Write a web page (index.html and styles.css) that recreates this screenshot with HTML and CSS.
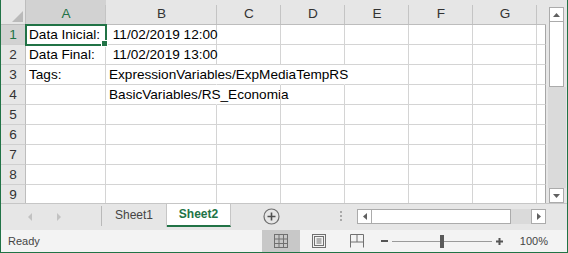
FILE: index.html
```html
<!DOCTYPE html>
<html lang="pt">
<head>
    <meta charset="UTF-8">
    <meta name="viewport" content="width=device-width, initial-scale=1.0">
    <title>Sheet2</title>
    <link rel="stylesheet" href="styles.css">
</head>
<body>
    <div class="window">
        <div class="workspace">
            <div class="sheet">
                <!-- header -->
                <div class="corner">
                    <svg width="11" height="11" viewBox="0 0 11 11"><polygon points="11,0 11,11 0,11" fill="#bababa"/></svg>
                </div>
                <div class="col-head active">A</div>
                <div class="col-head">B</div>
                <div class="col-head">C</div>
                <div class="col-head">D</div>
                <div class="col-head">E</div>
                <div class="col-head">F</div>
                <div class="col-head">G</div>
                <div class="col-head last"></div>

                <!-- row 1 -->
                <div class="row-head active">1</div>
                <div class="cell selected">Data Inicial:</div>
                <div class="cell"> 11/02/2019 12:00</div>
                <div class="cell"></div>
                <div class="cell"></div>
                <div class="cell"></div>
                <div class="cell"></div>
                <div class="cell"></div>
                <div class="cell edge"></div>

                <!-- row 2 -->
                <div class="row-head">2</div>
                <div class="cell">Data Final:</div>
                <div class="cell"> 11/02/2019 13:00</div>
                <div class="cell"></div>
                <div class="cell"></div>
                <div class="cell"></div>
                <div class="cell"></div>
                <div class="cell"></div>
                <div class="cell edge"></div>

                <!-- row 3 -->
                <div class="row-head">3</div>
                <div class="cell">Tags:</div>
                <div class="cell spill">ExpressionVariables/ExpMediaTempRS</div>
                <div class="cell spill"></div>
                <div class="cell spill"></div>
                <div class="cell"></div>
                <div class="cell"></div>
                <div class="cell"></div>
                <div class="cell edge"></div>

                <!-- row 4 -->
                <div class="row-head">4</div>
                <div class="cell"></div>
                <div class="cell spill">BasicVariables/RS_Economia</div>
                <div class="cell"></div>
                <div class="cell"></div>
                <div class="cell"></div>
                <div class="cell"></div>
                <div class="cell"></div>
                <div class="cell edge"></div>

                <!-- rows 5-9 -->
                <div class="row-head">5</div>
                <div class="cell"></div><div class="cell"></div><div class="cell"></div><div class="cell"></div>
                <div class="cell"></div><div class="cell"></div><div class="cell"></div><div class="cell edge"></div>

                <div class="row-head">6</div>
                <div class="cell"></div><div class="cell"></div><div class="cell"></div><div class="cell"></div>
                <div class="cell"></div><div class="cell"></div><div class="cell"></div><div class="cell edge"></div>

                <div class="row-head">7</div>
                <div class="cell"></div><div class="cell"></div><div class="cell"></div><div class="cell"></div>
                <div class="cell"></div><div class="cell"></div><div class="cell"></div><div class="cell edge"></div>

                <div class="row-head">8</div>
                <div class="cell"></div><div class="cell"></div><div class="cell"></div><div class="cell"></div>
                <div class="cell"></div><div class="cell"></div><div class="cell"></div><div class="cell edge"></div>

                <div class="row-head">9</div>
                <div class="cell"></div><div class="cell"></div><div class="cell"></div><div class="cell"></div>
                <div class="cell"></div><div class="cell"></div><div class="cell"></div><div class="cell edge"></div>
            </div>

            <div class="vscroll">
                <div class="sb-btn">
                    <svg width="7" height="4" viewBox="0 0 7 4"><polygon points="0,4 3.5,0 7,4" fill="#606060"/></svg>
                </div>
                <div class="sb-thumb-v"></div>
                <div class="sb-track-v"></div>
                <div class="sb-btn">
                    <svg width="7" height="4" viewBox="0 0 7 4"><polygon points="0,0 7,0 3.5,4" fill="#606060"/></svg>
                </div>
            </div>
        </div>

        <div class="tabbar">
            <div class="tab-nav">
                <svg width="4" height="8" viewBox="0 0 4 8"><polygon points="4,0 4,8 0,4" fill="#c2c2c2"/></svg>
                <svg width="4" height="8" viewBox="0 0 4 8"><polygon points="0,0 4,4 0,8" fill="#c2c2c2"/></svg>
            </div>
            <div class="tab-sep"></div>
            <div class="tab">Sheet1</div>
            <div class="tab active">Sheet2</div>
            <div class="add-sheet">
                <svg width="17" height="17" viewBox="0 0 17 17">
                    <circle cx="8.5" cy="8.5" r="7.5" fill="none" stroke="#6f6f6f" stroke-width="1.2"/>
                    <path d="M8.5 4.5v8M4.5 8.5h8" stroke="#505050" stroke-width="1.6"/>
                </svg>
            </div>
            <div class="split-dots"><span></span><span></span><span></span></div>
            <div class="hscroll">
                <div class="sb-btn">
                    <svg width="4" height="7" viewBox="0 0 4 7"><polygon points="4,0 4,7 0,3.5" fill="#606060"/></svg>
                </div>
                <div class="sb-thumb-h"></div>
                <div class="sb-track-h"></div>
                <div class="sb-btn">
                    <svg width="4" height="7" viewBox="0 0 4 7"><polygon points="0,0 4,3.5 0,7" fill="#606060"/></svg>
                </div>
            </div>
        </div>

        <div class="statusbar">
            <div class="status-text">Ready</div>
            <div class="view-btn active">
                <svg width="14" height="14" viewBox="0 0 14 14" fill="none" stroke="#707070">
                    <rect x="0.5" y="0.5" width="13" height="13"/>
                    <path d="M5 0.5v13M9.5 0.5v13M0.5 5h13M0.5 9.5h13"/>
                </svg>
            </div>
            <div class="view-btn">
                <svg width="14" height="14" viewBox="0 0 14 14" fill="none" stroke="#707070">
                    <rect x="0.5" y="0.5" width="13" height="13"/>
                    <rect x="2.5" y="2.5" width="9" height="9"/>
                    <path d="M4.5 5h5M4.5 7h5M4.5 9h5"/>
                </svg>
            </div>
            <div class="view-btn">
                <svg width="14" height="14" viewBox="0 0 14 14" fill="none" stroke="#707070">
                    <path d="M0.5 13.5V0.5h13v13M7 0.5v7.5M0.5 8h13"/>
                </svg>
            </div>
            <div class="zoom">
                <svg width="7" height="2" viewBox="0 0 7 2"><rect width="7" height="2" fill="#555"/></svg>
                <div class="zoom-track"><div class="zoom-thumb"></div></div>
                <svg width="7" height="7" viewBox="0 0 7 7"><path d="M0 3.5h7M3.5 0v7" stroke="#555" stroke-width="2"/></svg>
                <span class="zoom-level">100%</span>
            </div>
        </div>
    </div>
</body>
</html>
```

FILE: styles.css
```css
* {
    margin: 0;
    padding: 0;
    box-sizing: border-box;
}

body {
    font-family: 'Liberation Sans', Arial, sans-serif;
    background: #fff;
}

.window {
    width: 568px;
    height: 253px;
    display: flex;
    flex-direction: column;
    border: 1px solid #217346;
    border-top: none;
    overflow: hidden;
}

/* grid + vertical scrollbar */
.workspace {
    display: flex;
    height: 203px;
}

.sheet {
    display: grid;
    grid-template-columns: 25px 80px 111px 64px 64px 64px 64px 64px 9px;
    grid-template-rows: 25px repeat(9, 20px);
    width: 545px;
    height: 203px;
    overflow: hidden;
    background: #fff;
    font-size: 13.6px;
}

.corner {
    background: #e6e6e6;
    border-right: 1px solid #bdbdbd;
    border-bottom: 1px solid #bdbdbd;
    display: flex;
    align-items: flex-end;
    justify-content: flex-end;
    padding: 0 2px 2px 0;
}

.col-head {
    background: linear-gradient(to left, #c4c4c4 1px, transparent 1px) 0 5px / 100% 100% no-repeat, #e6e6e6;
    border-bottom: 1px solid #bdbdbd;
    color: #333;
    display: flex;
    align-items: center;
    justify-content: center;
    padding-top: 2px;
}

.col-head.last {
    background: #e6e6e6;
}

.row-head {
    background: #e6e6e6;
    border-right: 1px solid #bdbdbd;
    border-bottom: 1px solid #cfcfcf;
    color: #333;
    text-align: center;
    line-height: 19px;
}

.col-head.active,
.row-head.active {
    background-color: #d2d2d2;
    color: #217346;
}

.cell {
    border-right: 1px solid #d4d4d4;
    border-bottom: 1px solid #d4d4d4;
    padding: 0 3px;
    line-height: 19px;
    white-space: pre;
    color: #000;
}

.cell.spill {
    border-right-color: transparent;
}

.cell.edge {
    border-right-color: #a6a6a6;
}

.cell.selected {
    position: relative;
    z-index: 1;
    outline: 2px solid #217346;
    outline-offset: -1px;
}

.cell.selected::after {
    content: '';
    position: absolute;
    right: -2px;
    bottom: -2px;
    width: 5px;
    height: 5px;
    background: #217346;
    box-shadow: 0 0 0 1px #fff;
}

.vscroll {
    width: 21px;
    background: #e6e6e6;
    display: flex;
    flex-direction: column;
    padding: 7px 3px 0 3px;
}

.sb-btn {
    width: 15px;
    height: 15px;
    flex-shrink: 0;
    border: 1px solid #ababab;
    background: #fff;
    display: flex;
    align-items: center;
    justify-content: center;
}

.sb-thumb-v {
    height: 65px;
    border: 1px solid #ababab;
    border-top: none;
    background: #fff;
}

.sb-track-v {
    flex: 1;
    background: #dadada;
    margin: 0 -2px 0 -1px;
}

/* sheet tabs */
.tabbar {
    height: 27px;
    border-top: 1px solid #c6c6c6;
    background: #e6e6e6;
    display: flex;
    align-items: flex-start;
    padding-right: 21px;
    font-size: 12px;
}

.tab-nav {
    width: 100px;
    height: 100%;
    display: flex;
    align-items: center;
    gap: 25px;
    padding-left: 27px;
    padding-bottom: 1px;
}

.tab-sep {
    width: 1px;
    height: 20px;
    margin-top: 2px;
    background: #b9b9b9;
}

.tab {
    width: 65px;
    height: 23px;
    line-height: 22px;
    text-align: center;
    color: #444;
    border-right: 1px solid #c6c6c6;
}

.tab.active {
    width: 64px;
    background: #fff;
    color: #217346;
    font-weight: bold;
    border-bottom: 2px solid #217346;
    line-height: 21px;
}

.add-sheet {
    margin-left: 32px;
    margin-top: 4px;
    display: flex;
}

.split-dots {
    margin-left: auto;
    margin-right: 15px;
    margin-top: 7px;
    display: flex;
    flex-direction: column;
    gap: 2px;
}

.split-dots span {
    width: 2px;
    height: 2px;
    background: #a9a9a9;
}

.hscroll {
    width: 189px;
    height: 15px;
    margin-top: 5px;
    display: flex;
}

.sb-thumb-h {
    width: 139px;
    border: 1px solid #ababab;
    border-left: none;
    background: #fff;
}

.sb-track-h {
    flex: 1;
    background: #dadada;
}

/* status bar */
.statusbar {
    flex: 1;
    background: #f3f3f3;
    display: flex;
    align-items: stretch;
    font-size: 11px;
    color: #444;
}

.status-text {
    flex: 1;
    padding-left: 7px;
    display: flex;
    align-items: center;
}

.view-btn {
    width: 38px;
    display: flex;
    align-items: center;
    justify-content: center;
}

.view-btn.active {
    background: #c8c8c8;
}

.zoom {
    display: flex;
    align-items: center;
    gap: 4px;
    padding-left: 5px;
    padding-right: 19px;
}

.zoom-track {
    position: relative;
    width: 100px;
    height: 1px;
    background: #9a9a9a;
}

.zoom-thumb {
    position: absolute;
    left: 48px;
    top: -6px;
    width: 4px;
    height: 13px;
    background: #5a5a5a;
}

.zoom-level {
    margin-left: 13px;
}
```
